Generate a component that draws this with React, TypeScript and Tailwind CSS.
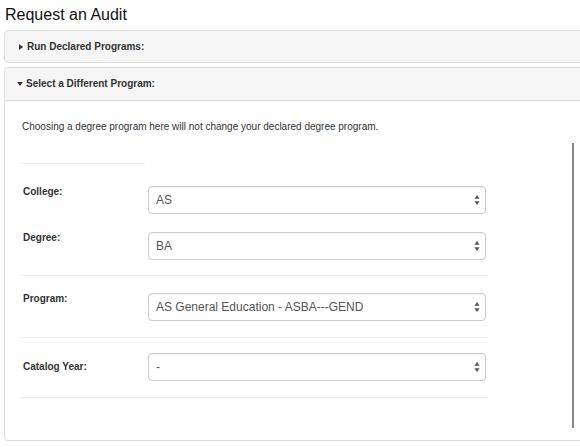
import React from "react";

const Arrows = () => (
  <svg
    width="6"
    height="11"
    viewBox="0 0 6 11"
    className="pointer-events-none absolute right-[5px] top-1/2 -translate-y-1/2"
  >
    <path d="M3 0.5 L5.6 4.3 L0.4 4.3 Z" fill="#555" />
    <path d="M3 10.5 L5.6 6.7 L0.4 6.7 Z" fill="#555" />
  </svg>
);

const FakeSelect = ({ value }: { value: string }) => (
  <div className="relative h-[28px] w-[338px] rounded-[4px] border border-[#ccc] bg-white shadow-[inset_0_1px_1px_rgba(0,0,0,0.06)]">
    <select
      value={value}
      onChange={() => {}}
      className="h-full w-full appearance-none bg-transparent pl-[7px] pr-[20px] text-[12px] text-[#555] outline-none"
    >
      <option value={value}>{value}</option>
    </select>
    <Arrows />
  </div>
);

const Caret = ({ open }: { open: boolean }) =>
  open ? (
    <svg width="6" height="4" viewBox="0 0 6 4" className="mr-[3px]">
      <path d="M0 0 L6 0 L3 4 Z" fill="#333" />
    </svg>
  ) : (
    <svg width="4" height="6" viewBox="0 0 4 6" className="mr-[4px] ml-[1px]">
      <path d="M0 0 L4 3 L0 6 Z" fill="#333" />
    </svg>
  );

export default function App() {
  return (
    <div className="h-[447px] w-[580px] overflow-hidden bg-white font-['Liberation_Sans',Arial,sans-serif] text-[#333]">
      <h3 className="h-[30px] pl-[5px] pt-[4px] text-[16px] leading-[21px] font-normal text-[#111]">
        Request an Audit
      </h3>

      <div className="ml-[4px] w-[620px]">
        {/* collapsed panel */}
        <div className="flex h-[33px] items-center rounded-[4px] border border-[#ddd] bg-[#f5f5f5] pl-[13px]">
          <Caret open={false} />
          <span className="text-[10px] font-bold leading-[12px]">
            Run Declared Programs:
          </span>
        </div>

        {/* open panel */}
        <div className="mt-[4px] rounded-[4px] border border-[#ddd]">
          <div className="flex h-[33px] items-center rounded-t-[4px] border-b border-[#ddd] bg-[#f5f5f5] pl-[12px]">
            <Caret open={true} />
            <span className="text-[10px] font-bold leading-[12px]">
              Select a Different Program:
            </span>
          </div>

          <div className="relative pl-[15px] pt-[19px] pb-[42px]">
            <p className="pl-[2px] text-[10px] leading-[14px]">
              Choosing a degree program here will not change your declared
              degree program.
            </p>

            <div className="mt-[29px] h-px w-[125px] bg-[#eee]" />

            <div className="w-[468px]">
              <div className="mt-[22px] flex items-start">
                <label className="w-[128px] pl-[3px] text-[10px] font-bold leading-[12px]">
                  College:
                </label>
                <FakeSelect value="AS" />
              </div>
              <div className="mt-[18px] flex items-start">
                <label className="w-[128px] pl-[3px] text-[10px] font-bold leading-[12px]">
                  Degree:
                </label>
                <FakeSelect value="BA" />
              </div>

              <div className="mt-[15px] h-px bg-[#eee]" />

              <div className="mt-[17px] flex items-start">
                <label className="w-[128px] pl-[3px] text-[10px] font-bold leading-[12px]">
                  Program:
                </label>
                <FakeSelect value="AS General Education - ASBA---GEND" />
              </div>

              <div className="mt-[16px] h-px bg-[#eee]" />

              <div className="mt-[15px] flex items-center">
                <label className="w-[128px] pl-[3px] text-[10px] font-bold leading-[12px]">
                  Catalog Year:
                </label>
                <FakeSelect value="-" />
              </div>

              <div className="mt-[16px] h-px bg-[#eee]" />
            </div>

            {/* scroll indicator */}
            <div className="absolute left-[567px] top-[42px] h-[285px] w-[2px] bg-[#888]" />
          </div>
        </div>
      </div>
    </div>
  );
}
